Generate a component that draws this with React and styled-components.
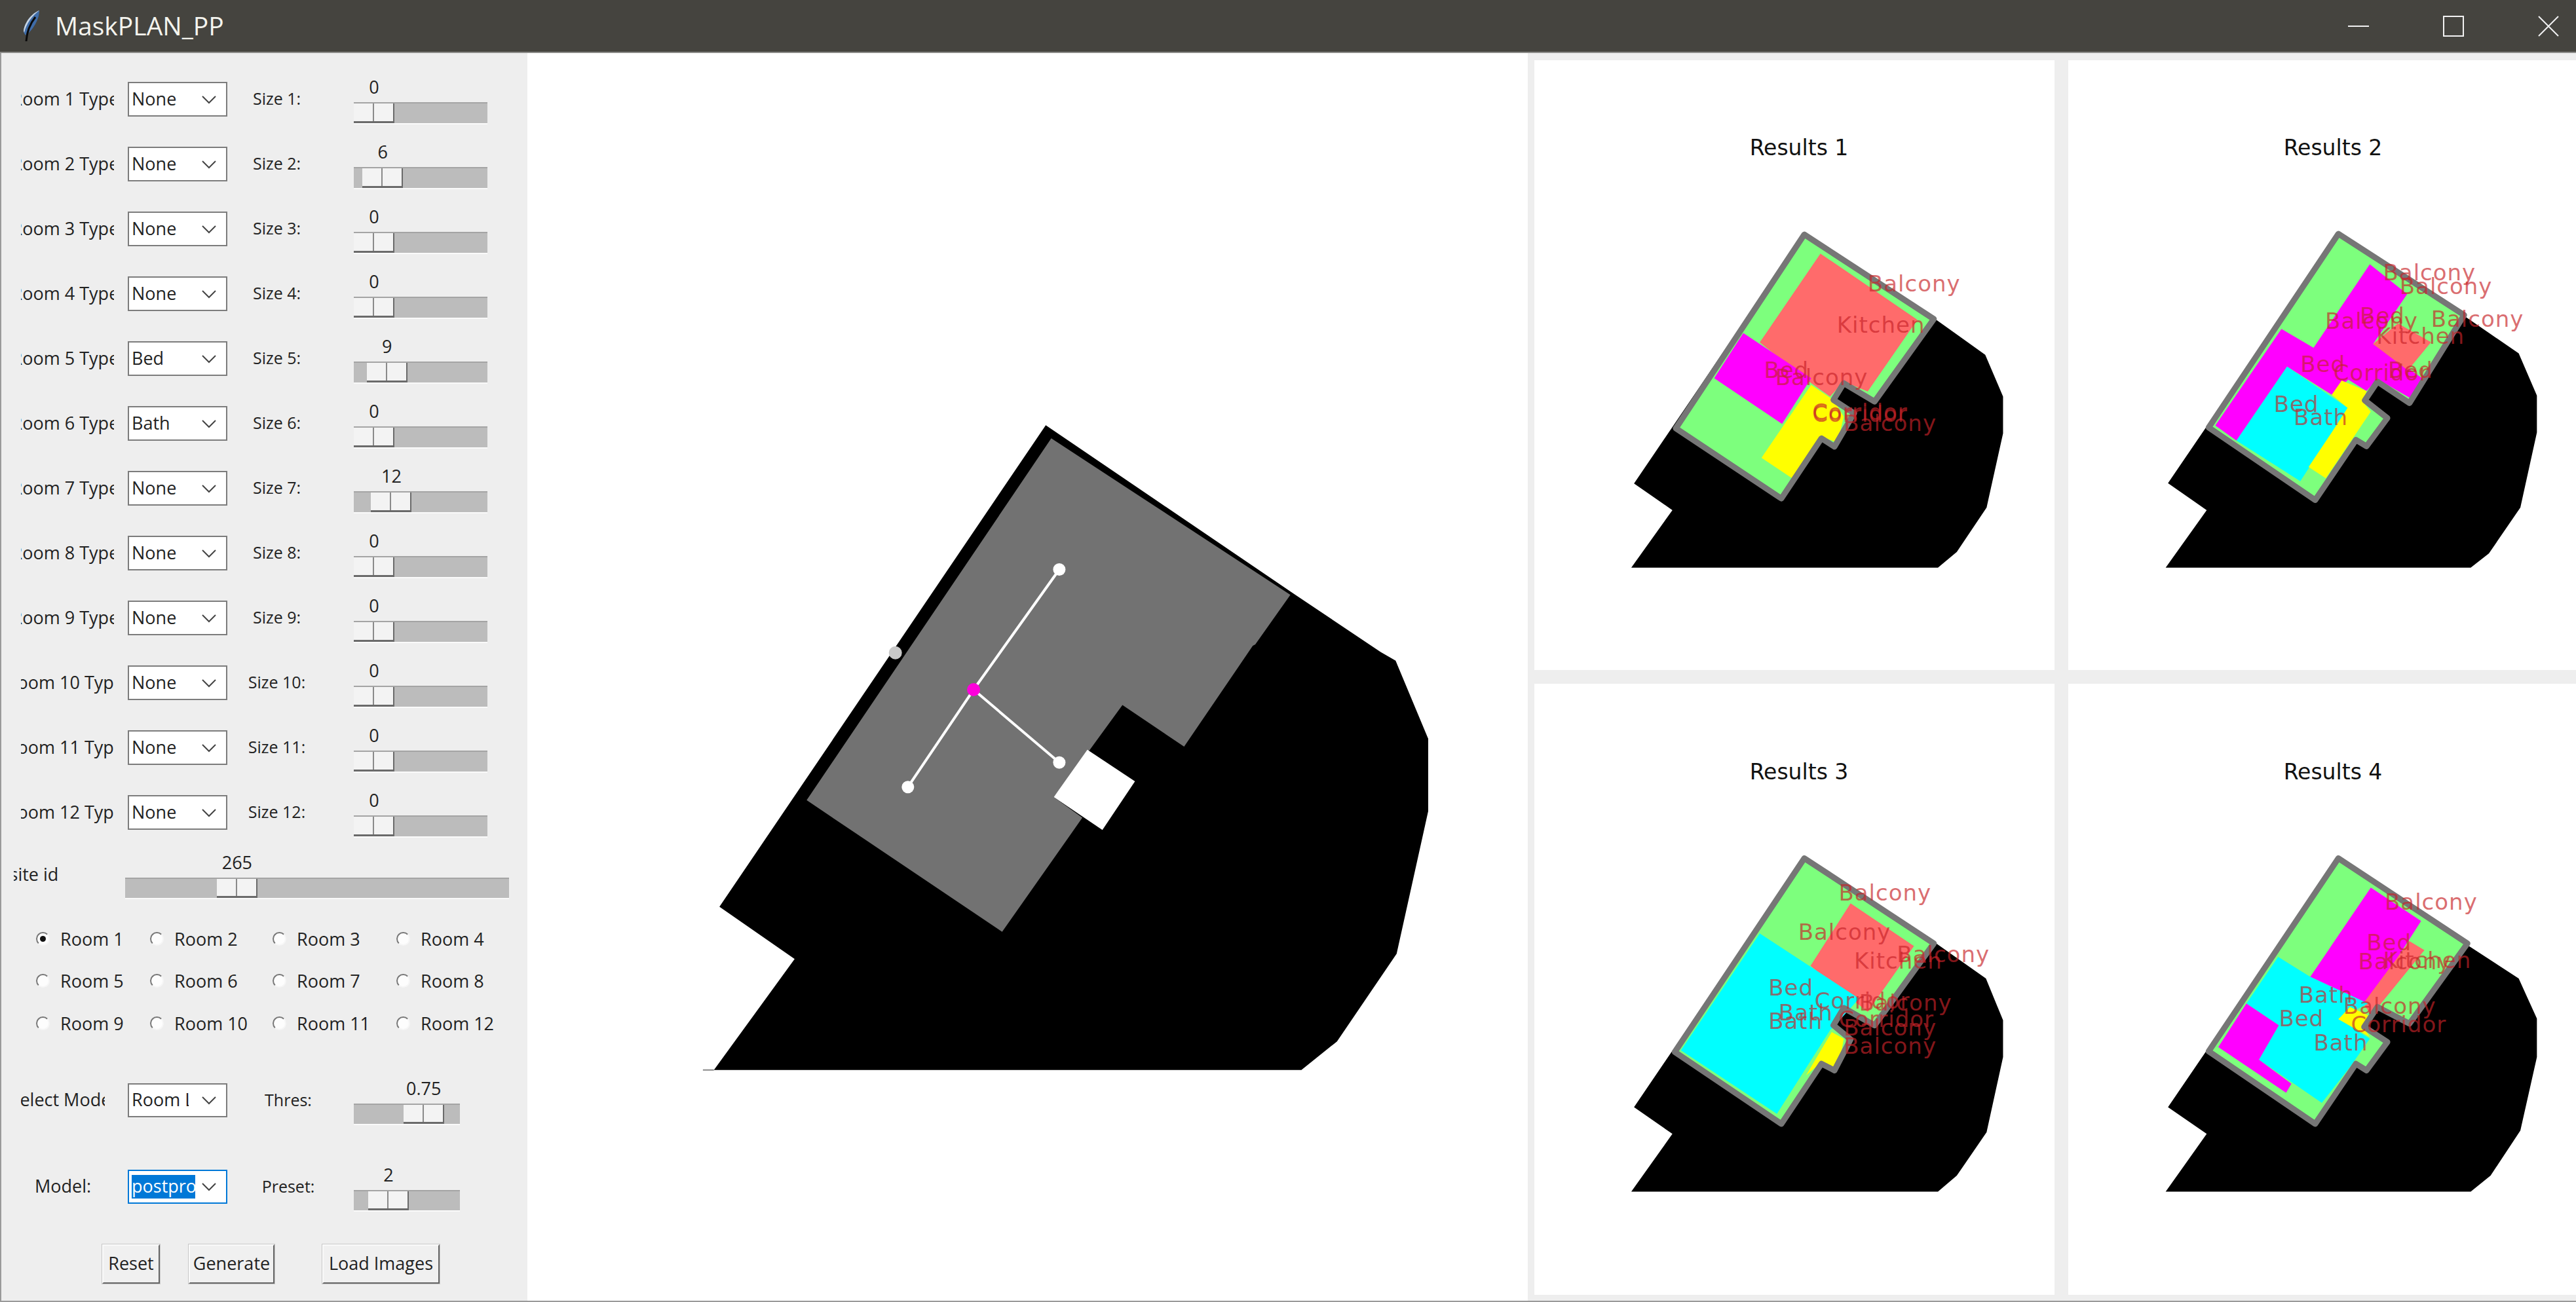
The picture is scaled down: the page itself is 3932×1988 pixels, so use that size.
import React from "react";
import styled, { createGlobalStyle } from "styled-components";

const GlobalStyle = createGlobalStyle`
	html, body {
		margin: 0;
		padding: 0;
		background: #eeeeee;
	}
`;

const UI_FONT = `"Open Sans", "Noto Sans", "Liberation Sans", sans-serif`;

const Window = styled.div`
	width: 3932px;
	height: 1988px;
	box-sizing: border-box;
	display: flex;
	flex-direction: column;
	overflow: hidden;
	font-family: ${UI_FONT};
	font-size: 27px;
	color: #222;
	background: #eeeeee;
	border-bottom: 2px solid #9a9a9a;
`;

const TitleBar = styled.header`
	height: 79px;
	flex: none;
	display: flex;
	align-items: center;
	background: #45443f;
	border-bottom: 2px solid #8b8b88;
	padding-left: 34px;
`;

const TitleText = styled.span`
	margin-left: 22px;
	padding-bottom: 2px;
	font-size: 39px;
	color: #f4f4ee;
	flex: 1;
`;

const WindowControls = styled.div`
	display: flex;
	align-items: center;
	gap: 113px;
	padding-right: 26px;
`;

const Body = styled.div`
	flex: 1;
	display: flex;
	min-height: 0;
`;

const SidePanel = styled.aside`
	width: 805px;
	flex: none;
	box-sizing: border-box;
	padding-top: 21px;
	background: #eeeeee;
	border-left: 2px solid #9a9a9a;
`;

const Row = styled.div`
	display: flex;
	align-items: center;
	height: ${({ $height }) => $height}px;
	margin-top: ${({ $top }) => $top || 0}px;
	padding-left: ${({ $left }) => ($left ?? 32) - 2}px;
`;

const ClipLabel = styled.div`
	width: ${({ $width }) => $width}px;
	margin-left: ${({ $gap }) => $gap || 0}px;
	padding-bottom: 3px;
	flex: none;
	display: flex;
	justify-content: center;
	overflow: hidden;
	white-space: nowrap;
	font-size: ${({ $small }) => ($small ? 25 : 27)}px;
`;

const SelectBox = styled.div`
	width: 152px;
	height: ${({ $tall }) => ($tall ? 53 : 52)}px;
	margin-left: ${({ $gap }) => $gap}px;
	flex: none;
	box-sizing: border-box;
	display: flex;
	align-items: center;
	padding-left: 4px;
	background: #fff;
	border: 2px solid ${({ $focus }) => ($focus ? "#0078d7" : "#7c7c7c")};
`;

const SelectText = styled.div`
	width: ${({ $focus }) => ($focus ? 97 : 87)}px;
	height: 36px;
	line-height: 33px;
	flex: none;
	overflow: hidden;
	white-space: nowrap;
	background: ${({ $focus }) => ($focus ? "#0078d7" : "transparent")};
	color: ${({ $focus }) => ($focus ? "#fff" : "#222")};
`;

const Chevron = styled.svg`
	width: 24px;
	height: 14px;
	margin-left: ${({ $focus }) => ($focus ? 9 : 19)}px;
	flex: none;
	fill: none;
	stroke: #444;
	stroke-width: 2;
`;

const Slider = styled.div`
	width: ${({ $width }) => $width}px;
	margin-left: ${({ $gap }) => $gap}px;
	flex: none;
`;

const SliderValue = styled.div`
	width: 62px;
	height: 42px;
	line-height: 38px;
	text-align: center;
`;

const Track = styled.div`
	height: ${({ $height }) => $height}px;
	box-sizing: border-box;
	display: flex;
	background: #bcbcbc;
	border-top: 2px solid #a4a4a4;
	border-bottom: 2px solid #fafafa;
`;

const Thumb = styled.div`
	width: 62px;
	flex: none;
	box-sizing: border-box;
	background: linear-gradient(to right, transparent 29px, #8a8a8a 29px, #8a8a8a 31px, transparent 31px), #f3f3f3;
	border-right: 2px solid #6a6a6a;
	border-bottom: 3px solid #6a6a6a;
`;

const RadioGrid = styled.div`
	display: grid;
	grid-template-columns: 174px 187px 189px 1fr;
	grid-auto-rows: 64.5px;
	margin-top: 28px;
	padding-left: 53px;
`;

const RadioItem = styled.div`
	display: flex;
	align-items: center;
	gap: 16px;
	white-space: nowrap;
`;

const RadioDot = styled.span`
	width: 21px;
	height: 21px;
	flex: none;
	box-sizing: border-box;
	display: flex;
	align-items: center;
	justify-content: center;
	border-radius: 50%;
	background: #fdfdfd;
	border: 2px solid #f6f6f6;
	border-top-color: #777;
	border-left-color: #777;
	&::after {
		content: "";
		width: 9px;
		height: 9px;
		border-radius: 50%;
		background: ${({ $checked }) => ($checked ? "#111" : "transparent")};
	}
`;

const ButtonRow = styled.div`
	display: flex;
	margin-top: 50px;
	padding-left: 154px;
`;

const Button = styled.button`
	width: ${({ $width }) => $width}px;
	height: 60px;
	margin-left: ${({ $gap }) => $gap || 0}px;
	padding: 0 0 3px;
	font: inherit;
	color: #222;
	background: #f0f0f0;
	border: 2px solid;
	border-color: #fafafa #666 #666 #fafafa;
	box-shadow: 0 0 0 1px #c8c8c8;
`;

const Canvas = styled.main`
	width: 1527px;
	flex: none;
	background: #fff;
`;

const ResultsGrid = styled.section`
	flex: 1;
	display: grid;
	grid-template-columns: 794px 775px;
	grid-template-rows: 931px 933px;
	column-gap: 21px;
	row-gap: 21px;
	padding: 11px 0 0 10px;
	background: #eeeeee;
`;

const Figure = styled.div`
	background: #fff;
	overflow: hidden;
`;

const Plot = styled.svg`
	display: block;
	width: 100%;
	height: 100%;
`;

const Caption = styled.text`
	font-family: "DejaVu Sans", sans-serif;
	font-size: 33px;
	fill: #111;
	text-anchor: middle;
`;

const RoomTag = styled.text`
	font-family: "DejaVu Sans", sans-serif;
	font-size: 34px;
	letter-spacing: 1px;
	fill: rgb(200, 35, 40);
	fill-opacity: 0.68;
`;

const ROOM_COLORS = {
	kitchen: "#ff6b6b",
	bed: "#ff00ff",
	bath: "#00ffff",
	corridor: "#ffff00"
};

// points were read off zoomed crops, so each plot keeps its own crop scale
const toPoints = (pts, m) => pts.map(([x, y]) => `${x / m.sx + m.ox},${y / m.sy + m.oy}`).join(" ");

const RESULTS = [
	{
		title: "Results 1",
		titleY: 145,
		map: { sx: 1.912, sy: 1.96, ox: -22, oy: -12 },
		site: [[830, 540], [1215, 800], [1358, 905], [1410, 1030], [1410, 1140], [1362, 1362], [1275, 1495], [1220, 1542], [325, 1542], [445, 1370], [333, 1290]],
		outline: [[830, 545], [1208, 798], [1035, 1045], [945, 990], [915, 1040], [975, 1080], [918, 1180], [880, 1155], [763, 1335], [455, 1125]],
		rooms: [
			["kitchen", [[877, 602], [1160, 800], [1015, 1015], [945, 985], [905, 1030], [850, 990], [700, 868]]],
			["bed", [[652, 840], [850, 975], [765, 1112], [567, 975]]],
			["corridor", [[850, 995], [915, 1040], [945, 1090], [935, 1135], [920, 1165], [880, 1150], [795, 1275], [705, 1213]]]
		],
		tags: [
			["Balcony", 1015, 715], ["Kitchen", 925, 838], ["Bed", 712, 975], ["Balcony", 745, 995],
			["Corridor", 853, 1100], ["Corridor", 853, 1105], ["Balcony", 945, 1133]
		]
	},
	{
		title: "Results 2",
		titleY: 145,
		map: { sx: 1.98, sy: 1.742, ox: -17, oy: -92 },
		site: [[850, 620], [1230, 840], [1395, 940], [1450, 1052], [1450, 1150], [1400, 1350], [1305, 1472], [1250, 1510], [328, 1510], [452, 1357], [335, 1285]],
		outline: [[850, 622], [1230, 838], [1065, 1072], [968, 1015], [930, 1065], [998, 1112], [935, 1187], [903, 1170], [780, 1330], [458, 1137]],
		rooms: [
			["bed", [[678, 875], [775, 925], [945, 703], [1058, 782], [955, 915], [1110, 1010], [1065, 1058], [968, 1008], [935, 1040], [880, 1010], [830, 1050], [695, 975], [542, 1172], [478, 1132]]],
			["kitchen", [[955, 915], [1030, 860], [1130, 910], [1060, 985]]],
			["bath", [[695, 975], [878, 1085], [735, 1280], [542, 1172]]],
			["corridor", [[860, 1012], [935, 1040], [925, 1070], [948, 1095], [812, 1272], [760, 1242], [830, 1150], [878, 1085], [830, 1050]]]
		],
		tags: [
			["Balcony", 985, 745], ["Balcony", 1035, 782], ["Balcony", 810, 875], ["Balcony", 1130, 870],
			["Bed", 915, 860], ["Kitchen", 965, 915], ["Bed", 735, 990], ["Corridor", 835, 1012],
			["Bed", 1000, 1005], ["Bed", 655, 1095], ["Bath", 715, 1130]
		]
	},
	{
		title: "Results 3",
		titleY: 146,
		map: { sx: 1.912, sy: 1.96, ox: -22, oy: -4 },
		site: [[830, 525], [1215, 785], [1360, 890], [1410, 1015], [1410, 1125], [1362, 1350], [1275, 1480], [1220, 1528], [325, 1528], [445, 1355], [333, 1275]],
		outline: [[830, 530], [1208, 785], [1035, 1030], [945, 978], [915, 1030], [965, 1072], [918, 1165], [880, 1145], [763, 1325], [452, 1110]],
		rooms: [
			["kitchen", [[965, 665], [1150, 793], [1015, 990], [848, 852]]],
			["bath", [[700, 755], [990, 950], [915, 1035], [905, 1045], [750, 1295], [470, 1105]]],
			["corridor", [[910, 1050], [945, 1070], [935, 1130], [915, 1165], [880, 1140], [835, 1180]]]
		],
		tags: [
			["Balcony", 930, 657], ["Balcony", 812, 775], ["Kitchen", 975, 860], ["Balcony", 1100, 840],
			["Bed", 725, 940], ["Corridor", 860, 980], ["Balcony", 990, 985], ["Bath", 755, 1015],
			["Bath", 725, 1040], ["Corridor", 930, 1035], ["Balcony", 945, 1060], ["Balcony", 945, 1115]
		]
	},
	{
		title: "Results 4",
		titleY: 146,
		map: { sx: 1.98, sy: 1.96, ox: -17, oy: -4 },
		site: [[850, 527], [1240, 790], [1395, 890], [1450, 1010], [1450, 1125], [1400, 1345], [1310, 1480], [1250, 1528], [328, 1528], [452, 1355], [335, 1275]],
		outline: [[850, 530], [1240, 785], [1065, 1025], [968, 975], [928, 1035], [998, 1080], [935, 1165], [903, 1145], [780, 1325], [458, 1108]],
		rooms: [
			["bed", [[948, 618], [1100, 718], [940, 965], [765, 885]]],
			["kitchen", [[1065, 778], [1110, 805], [950, 1000], [925, 965]]],
			["bath", [[668, 825], [765, 885], [940, 965], [850, 1010], [945, 1070], [885, 1155], [800, 1262], [610, 1133], [670, 1030], [572, 965]]],
			["corridor", [[885, 975], [940, 1000], [928, 1040], [945, 1065], [850, 1012]]],
			["bed", [[572, 965], [670, 1030], [610, 1133], [708, 1205], [692, 1232], [487, 1095]]]
		],
		tags: [
			["Balcony", 990, 685], ["Bed", 935, 805], ["Kitchen", 985, 858], ["Balcony", 910, 862],
			["Bath", 730, 962], ["Bed", 670, 1033], ["Balcony", 865, 995], ["Corridor", 888, 1050], ["Bath", 775, 1105]
		]
	}
];

const ResultPlot = ({ data }) => {
	const m = data.map;
	return (
		<Plot>
			<Caption x="404" y={ data.titleY }>{ data.title }</Caption>
			<polygon points={ toPoints(data.site, m) } fill="#000" />
			<polygon points={ toPoints(data.outline, m) } fill="#7dff7d" />
			{ data.rooms.map(([type, pts], i) => (
				<polygon key={ i } points={ toPoints(pts, m) } fill={ ROOM_COLORS[type] } />
			)) }
			<polygon points={ toPoints(data.outline, m) } fill="none" stroke="#767676" strokeWidth="9" strokeLinejoin="round" />
			{ data.tags.map(([label, x, y], i) => (
				<RoomTag key={ i } x={ x / m.sx + m.ox } y={ y / m.sy + m.oy }>{ label }</RoomTag>
			)) }
		</Plot>
	);
};

const MAIN_MAP = { sx: 1.307, sy: 1.493, ox: 235, oy: 538 };
const mainPoint = ([x, y]) => ({ cx: x / MAIN_MAP.sx + MAIN_MAP.ox, cy: y / MAIN_MAP.sy + MAIN_MAP.oy });
const HUB = [583, 648];
const NODES = [[754, 374], [452, 870], [754, 814]];

const MainPlot = () => (
	<Plot>
		<polygon
			points={ toPoints([[727, 45], [1225, 432], [1395, 562], [1425, 582], [1490, 760], [1490, 925], [1427, 1250], [1308, 1450], [1237, 1515], [65, 1515], [226, 1262], [76, 1143]], MAIN_MAP) }
			fill="#000"
		/>
		<polyline points={ toPoints([[43, 1515], [65, 1515]], MAIN_MAP) } stroke="#888" strokeWidth="2" />
		<polygon
			points={ toPoints([[738, 75], [1215, 432], [1145, 545], [1140, 548], [1003, 778], [880, 683], [815, 785], [743, 893], [800, 940], [640, 1200], [250, 900]], MAIN_MAP) }
			fill="#727272"
		/>
		<polygon points={ toPoints([[810, 785], [905, 857], [840, 968], [743, 893]], MAIN_MAP) } fill="#fff" />
		{ NODES.map((n, i) => (
			<polyline key={ i } points={ toPoints([HUB, n], MAIN_MAP) } stroke="#fff" strokeWidth="4" />
		)) }
		{ NODES.map((n, i) => (
			<circle key={ i } { ...mainPoint(n) } r="9.5" fill="#fff" />
		)) }
		<circle { ...mainPoint([427, 564]) } r="10" fill="#c8c8c8" />
		<circle { ...mainPoint(HUB) } r="10" fill="#ff00dc" />
	</Plot>
);

const Feather = () => (
	<svg width="28" height="50" viewBox="0 0 28 50">
		<path d="M26 1C15 5 4 18 2 32c0 3 2 6 4 7C15 31 26 16 26 1Z" fill="#3f6ca8" />
		<path d="M26 1C15 5 4 18 2 32l1 3C6 21 15 9 26 1Z" fill="#c9d6e4" />
		<path d="M20 11C12 21 7 33 6 48" fill="none" stroke="#0a0a0a" strokeWidth="3" />
	</svg>
);

const Select = ({ value, gap = 21, focus, tall }) => (
	<SelectBox $gap={ gap } $focus={ focus } $tall={ tall }>
		<SelectText $focus={ focus }>{ value }</SelectText>
		<Chevron $focus={ focus } viewBox="0 0 24 14"><path d="M2 2l10 10L22 2" /></Chevron>
	</SelectBox>
);

const ValueSlider = ({ value, offset, width, gap, track = 33 }) => (
	<Slider $width={ width } $gap={ gap }>
		<SliderValue style={ { marginLeft: offset } }>{ value }</SliderValue>
		<Track $height={ track }>
			<Thumb style={ { marginLeft: offset } } />
		</Track>
	</Slider>
);

const ROOM_ROWS = [
	{ type: "None", size: 0 }, { type: "None", size: 6 }, { type: "None", size: 0 }, { type: "None", size: 0 },
	{ type: "Bed", size: 9 }, { type: "Bath", size: 0 }, { type: "None", size: 12 }, { type: "None", size: 0 },
	{ type: "None", size: 0 }, { type: "None", size: 0 }, { type: "None", size: 0 }, { type: "None", size: 0 }
];

export default function App() {
	return (
		<Window>
			<GlobalStyle />
			<TitleBar>
				<Feather />
				<TitleText>MaskPLAN_PP</TitleText>
				<WindowControls>
					<svg width="32" height="32" viewBox="0 0 32 32"><path d="M0 16h32" stroke="#f2f2f2" strokeWidth="2" /></svg>
					<svg width="32" height="32" viewBox="0 0 32 32"><rect x="1" y="1" width="30" height="30" fill="none" stroke="#f2f2f2" strokeWidth="2" /></svg>
					<svg width="32" height="32" viewBox="0 0 32 32"><path d="M1 1l30 30M31 1L1 31" stroke="#f2f2f2" strokeWidth="2" /></svg>
				</WindowControls>
			</TitleBar>
			<Body>
				<SidePanel>
					{ ROOM_ROWS.map((room, i) => (
						<Row key={ i } $height={ 99 }>
							<ClipLabel $width={ 142 }>{ `Room ${i + 1} Type:` }</ClipLabel>
							<Select value={ room.type } tall />
							<ClipLabel $width={ 85 } $gap={ 33 } $small>{ `Size ${i + 1}:` }</ClipLabel>
							<ValueSlider value={ room.size } offset={ room.size * 2.2 } width={ 204 } gap={ 75 } track={ 34 } />
						</Row>
					)) }
					<Row $height={ 75 } $top={ 8 } $left={ 21 }>
						<ClipLabel $width={ 69 }>site id:</ClipLabel>
						<ValueSlider value={ 265 } offset={ 265 * 0.528 } width={ 586 } gap={ 101 } />
					</Row>
					<RadioGrid>
						{ ROOM_ROWS.map((_, i) => (
							<RadioItem key={ i }>
								<RadioDot $checked={ i === 0 } />
								{ `Room ${i + 1}` }
							</RadioItem>
						)) }
					</RadioGrid>
					<Row $height={ 75 } $top={ 48 }>
						<ClipLabel $width={ 128 }>Select Mode:</ClipLabel>
						<Select value="Room Layout" gap={ 35 } />
						<ClipLabel $width={ 80 } $gap={ 53 } $small>Thres:</ClipLabel>
						<ValueSlider value={ 0.75 } offset={ 0.75 * 101 } width={ 162 } gap={ 60 } />
					</Row>
					<Row $height={ 75 } $top={ 57 }>
						<ClipLabel $width={ 128 }>Model:</ClipLabel>
						<Select value="postprocess" gap={ 35 } focus />
						<ClipLabel $width={ 80 } $gap={ 53 } $small>Preset:</ClipLabel>
						<ValueSlider value={ 2 } offset={ 2 * 11 } width={ 162 } gap={ 60 } />
					</Row>
					<ButtonRow>
						<Button $width={ 88 }>Reset</Button>
						<Button $width={ 131 } $gap={ 44 }>Generate</Button>
						<Button $width={ 179 } $gap={ 73 }>Load Images</Button>
					</ButtonRow>
				</SidePanel>
				<Canvas>
					<MainPlot />
				</Canvas>
				<ResultsGrid>
					{ RESULTS.map((result) => (
						<Figure key={ result.title }>
							<ResultPlot data={ result } />
						</Figure>
					)) }
				</ResultsGrid>
			</Body>
		</Window>
	);
}
